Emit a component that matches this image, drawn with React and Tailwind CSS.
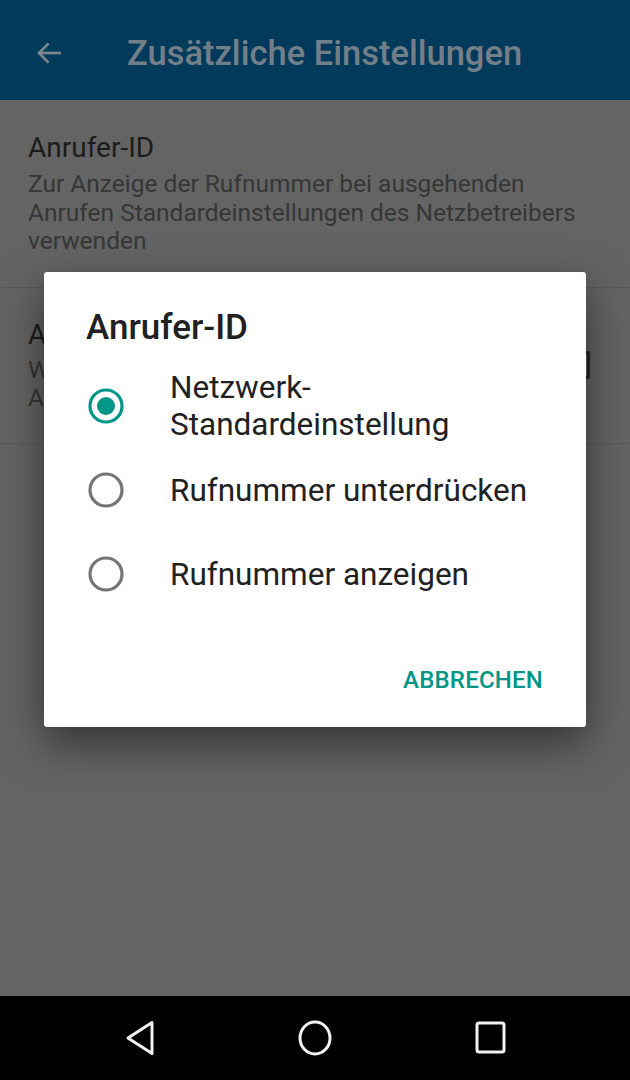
import React from "react";

function Radio({ checked }) {
  return (
    <svg width="40" height="40" viewBox="0 0 40 40" className="shrink-0">
      <circle cx="20" cy="20" r="16" fill="none" stroke={checked ? "#009688" : "#757575"} strokeWidth="3.2" />
      {checked && <circle cx="20" cy="20" r="9" fill="#009688" />}
    </svg>
  );
}

export default function App() {
  const font = { fontFamily: "Roboto, 'Noto Sans', sans-serif" };
  return (
    <div className="relative w-[630px] h-[1080px] flex flex-col overflow-hidden bg-[#646464]" style={font}>
      {/* App bar */}
      <div className="h-[100px] shrink-0 bg-[#023a5b] flex items-center pt-[6px]">
        <div className="w-[127px] pl-[33px] flex items-center">
          <svg width="32" height="32" viewBox="0 0 24 24" fill="none" stroke="#7d878e" strokeWidth="2" strokeLinecap="square">
            <path d="M20 12H5" />
            <path d="M11 5.5L4.5 12l6.5 6.5" />
          </svg>
        </div>
        <div className="text-[34.5px] font-medium text-[#737f88] leading-none">Zusätzliche Einstellungen</div>
      </div>

      {/* Settings list (dimmed) */}
      <div className="flex-1 flex flex-col">
        <div className="px-[28px] pt-[31px] pb-[31px] border-b border-[#5a5a5a]">
          <div className="text-[28px] leading-[34px] text-[#1c1c1c]">Anrufer-ID</div>
          <div className="mt-[5px] text-[24.5px] leading-[28.5px] text-[#363636]">
            Zur Anzeige der Rufnummer bei ausgehenden Anrufen Standardeinstellungen des Netzbetreibers verwenden
          </div>
        </div>
        <div className="pl-[28px] pr-[40px] pt-[30px] pb-[30px] border-b border-[#5a5a5a] flex items-center gap-[20px]">
          <div className="flex-1">
            <div className="text-[28px] leading-[34px] text-[#1c1c1c]">Anklopfen</div>
            <div className="mt-[4px] text-[24.5px] leading-[28.5px] text-[#363636]">
              Während eines Anrufs über eingehende<br />Anrufe benachrichtigen
            </div>
          </div>
          <div className="w-[28px] h-[28px] rounded-[3px] border-[3px] border-[#262626] shrink-0"></div>
        </div>
      </div>

      {/* Nav bar */}
      <div className="h-[84px] shrink-0 bg-black flex items-center justify-between px-[120px]">
        <svg width="40" height="40" viewBox="0 0 40 40" fill="none" stroke="#f2f2f2" strokeWidth="3" strokeLinejoin="round">
          <path d="M8 20 L32 4.5 L32 35.5 Z" />
        </svg>
        <svg width="40" height="40" viewBox="0 0 40 40" fill="none" stroke="#f2f2f2" strokeWidth="3">
          <ellipse cx="20" cy="20" rx="15" ry="16" />
        </svg>
        <svg width="40" height="40" viewBox="0 0 40 40" fill="none" stroke="#f2f2f2" strokeWidth="3">
          <rect x="7" y="5" width="27" height="29" rx="2" />
        </svg>
      </div>

      {/* Dialog */}
      <div className="absolute left-[44px] top-[272px] w-[542px] h-[455px] bg-white rounded-[3px] shadow-[0_16px_44px_rgba(0,0,0,0.5)] flex flex-col">
        <div className="pt-[38px] pl-[42px] text-[35px] leading-[36px] font-medium text-[#212121]">Anrufer-ID</div>
        <div className="mt-[18px] flex flex-col">
          <div className="h-[84px] flex items-center pl-[42px]">
            <Radio checked />
            <div className="ml-[44px] text-[31.5px] leading-[37px] text-[#212121]">
              Netzwerk-<br />Standardeinstellung
            </div>
          </div>
          <div className="h-[84px] flex items-center pl-[42px]">
            <Radio />
            <div className="ml-[44px] text-[31.5px] leading-[37px] text-[#212121]">Rufnummer unterdrücken</div>
          </div>
          <div className="h-[84px] flex items-center pl-[42px]">
            <Radio />
            <div className="ml-[44px] text-[31.5px] leading-[37px] text-[#212121]">Rufnummer anzeigen</div>
          </div>
        </div>
        <div className="mt-[40px] h-[48px] flex items-center justify-end pr-[43px]">
          <div className="text-[24px] font-medium text-[#009688] tracking-[0.2px]">ABBRECHEN</div>
        </div>
      </div>
    </div>
  );
}
